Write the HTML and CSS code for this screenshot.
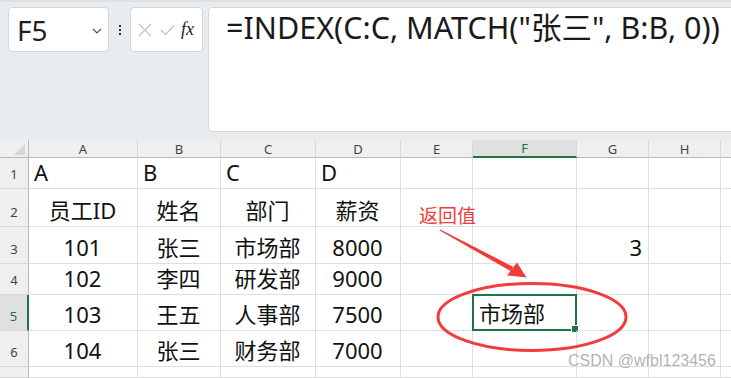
FILE: index.html
```html
<!DOCTYPE html>
<html lang="zh-CN">
<head>
    <meta charset="UTF-8">
    <title>INDEX MATCH</title>
    <link rel="stylesheet" href="styles.css">
</head>
<body>
    <div class="toolbar">
        <div class="name-box">
            <span class="cell-ref">F5</span>
            <svg class="chevron" width="10" height="6" viewBox="0 0 10 6"><path d="M1 1 L5 5 L9 1" fill="none" stroke="#555" stroke-width="1.2"/></svg>
        </div>
        <div class="kebab"><i></i><i></i><i></i></div>
        <div class="fx-box">
            <svg width="14" height="14" viewBox="0 0 14 14"><path d="M1 1 L13 13 M13 1 L1 13" stroke="#c4c4c4" stroke-width="1.3"/></svg>
            <svg width="15" height="12" viewBox="0 0 15 12"><path d="M1 6 L5.5 10.5 L14 1.5" fill="none" stroke="#c4c4c4" stroke-width="1.3"/></svg>
            <span class="fx">fx</span>
        </div>
        <div class="formula-box">=INDEX(C:C, MATCH("张三", B:B, 0))</div>
    </div>

    <div class="sheet">
        <div class="corner"></div>
        <div class="col-head">A</div>
        <div class="col-head">B</div>
        <div class="col-head">C</div>
        <div class="col-head">D</div>
        <div class="col-head">E</div>
        <div class="col-head active">F</div>
        <div class="col-head">G</div>
        <div class="col-head">H</div>
        <div class="col-head"></div>

        <div class="row-head">1</div>
        <div class="cell left">A</div>
        <div class="cell left">B</div>
        <div class="cell left">C</div>
        <div class="cell left">D</div>
        <div class="cell"></div><div class="cell"></div><div class="cell"></div><div class="cell"></div><div class="cell"></div>

        <div class="row-head">2</div>
        <div class="cell">员工ID</div>
        <div class="cell">姓名</div>
        <div class="cell">部门</div>
        <div class="cell">薪资</div>
        <div class="cell"></div><div class="cell"></div><div class="cell"></div><div class="cell"></div><div class="cell"></div>

        <div class="row-head">3</div>
        <div class="cell">101</div>
        <div class="cell">张三</div>
        <div class="cell">市场部</div>
        <div class="cell">8000</div>
        <div class="cell"></div><div class="cell"></div>
        <div class="cell right">3</div>
        <div class="cell"></div><div class="cell"></div>

        <div class="row-head">4</div>
        <div class="cell">102</div>
        <div class="cell">李四</div>
        <div class="cell">研发部</div>
        <div class="cell">9000</div>
        <div class="cell"></div><div class="cell"></div><div class="cell"></div><div class="cell"></div><div class="cell"></div>

        <div class="row-head active">5</div>
        <div class="cell">103</div>
        <div class="cell">王五</div>
        <div class="cell">人事部</div>
        <div class="cell">7500</div>
        <div class="cell"></div>
        <div class="cell left selected">市场部<span class="handle"></span></div>
        <div class="cell"></div><div class="cell"></div><div class="cell"></div>

        <div class="row-head">6</div>
        <div class="cell">104</div>
        <div class="cell">张三</div>
        <div class="cell">财务部</div>
        <div class="cell">7000</div>
        <div class="cell"></div><div class="cell"></div><div class="cell"></div><div class="cell"></div><div class="cell"></div>

        <div class="row-head"></div>
        <div class="cell"></div><div class="cell"></div><div class="cell"></div><div class="cell"></div>
        <div class="cell"></div><div class="cell"></div><div class="cell"></div><div class="cell"></div><div class="cell"></div>
    </div>

    <!-- пометки поверх таблицы -->
    <div class="note">返回值</div>
    <svg class="marks" width="731" height="378" viewBox="0 0 731 378">
        <polygon points="440.3,229.4 513.2,266.8 510.8,271.2 439.7,230.6" fill="#f23c3c"/>
        <polygon points="507,275.5 517,262.5 526.5,277.5" fill="#f23c3c"/>
        <ellipse cx="532" cy="317" rx="94" ry="33.5" fill="none" stroke="#f23c3c" stroke-width="3"/>
    </svg>
    <div class="watermark">CSDN @wfbl123456</div>
</body>
</html>
```

FILE: styles.css
```css
:root {
    --bar-bg: #e8ecef;
    --box-border: #d3d7db;
    --head-bg: #efefef;
    --head-line: #b8b8b8;
    --grid-line: #dedede;
    --accent-green: #217346;
    --mark-red: #f23c3c;
}

body {
    margin: 0;
    width: 731px;
    height: 378px;
    overflow: hidden;
    position: relative;
    background-color: var(--bar-bg);
    font-family: "Noto Sans", "Noto Sans CJK SC", sans-serif;
    color: #111;
}

.toolbar {
    display: flex;
    align-items: flex-start;
    height: 140px;
    padding: 7px 0 0 8px;
    box-sizing: border-box;
    border-top: 2px solid #dde1e5;
}

.name-box, .fx-box, .formula-box {
    background: #fff;
    border: 1px solid var(--box-border);
    border-radius: 4px;
    box-sizing: border-box;
    flex-shrink: 0;
}

.name-box {
    width: 101px; height: 45px; margin-top: -2px;
    display: flex; align-items: center; justify-content: space-between;
    padding: 0 6px 0 8px;
}
.cell-ref { font-size: 28px; color: #1f1f1f; }
.chevron { margin-top: 3px; }

.kebab {
    width: 21px; height: 45px; margin-top: -2px; flex-shrink: 0;
    display: flex; flex-direction: column; align-items: center; justify-content: center; gap: 2px;
}
.kebab i { display: block; width: 2px; height: 2px; background: #333; }

.fx-box {
    width: 73px; height: 45px; margin-top: -2px;
    display: flex; align-items: center; gap: 8px; padding-left: 7px;
}
.fx { font-family: "Liberation Serif", serif; font-style: italic; font-size: 18px; color: #222; margin-left: -2px; }

.formula-box {
    width: 530px; height: 125px; margin: -2px 0 0 5px;
    padding: 1px 0 0 17px;
    font-size: 30.5px; line-height: 1.2; color: #1a1a1a;
    white-space: nowrap; overflow: hidden;
}

.sheet {
    display: grid;
    grid-template-columns: 29px 109px 83px 95px 85px 72px 104px 72px 72px 1fr;
    grid-template-rows: 18px 31px 38px 37px 31px 36px 36px 1fr;
    height: 238px;
    background: #fff;
}

.corner {
    background: var(--head-bg);
    border-right: 1px solid var(--head-line);
    border-bottom: 1px solid var(--head-line);
    position: relative;
}
.corner::after {
    content: ""; position: absolute; right: 3px; bottom: 2px;
    border-left: 11px solid transparent; border-bottom: 11px solid #d6d6d6;
}

.col-head, .row-head {
    background: var(--head-bg);
    font-size: 13px; color: #444;
    display: flex; justify-content: center;
}
.col-head {
    align-items: center;
    border-right: 1px solid #d8d8d8;
    border-bottom: 1px solid var(--head-line);
}
.row-head {
    align-items: flex-end; padding-bottom: 5px; box-sizing: border-box;
    border-right: 1px solid var(--head-line);
    border-bottom: 1px solid #d8d8d8;
}
.col-head.active { background: #e0e0e0; border-bottom: 2px solid var(--accent-green); color: #217346; }
.row-head.active { background: #e0e0e0; border-right: 2px solid var(--accent-green); color: #217346; }

.cell {
    border-right: 1px solid var(--grid-line);
    border-bottom: 1px solid var(--grid-line);
    font-size: 22px;
    display: flex; align-items: flex-end; justify-content: center;
    padding: 0 6px 1px 5px;
    white-space: nowrap; position: relative;
}
.cell.left { justify-content: flex-start; }
.cell.right { justify-content: flex-end; }

.cell.selected {
    border: 2px solid var(--accent-green);
    margin: -1px 0 0 -1px;
    padding-left: 5px;
}
.handle {
    position: absolute; right: -4px; bottom: -4px;
    width: 6px; height: 6px; background: var(--accent-green);
    border: 1px solid #fff;
}

.note {
    position: absolute; left: 419px; top: 201px;
    font-size: 19px; color: var(--mark-red);
}
.marks { position: absolute; left: 0; top: 0; pointer-events: none; }

.watermark {
    position: absolute; left: 568px; top: 352px;
    font-family: "Liberation Sans", sans-serif; font-size: 16px;
    color: rgba(110, 110, 110, 0.55);
    text-shadow: 0 0 1px rgba(255, 255, 255, 0.8);
}
```
